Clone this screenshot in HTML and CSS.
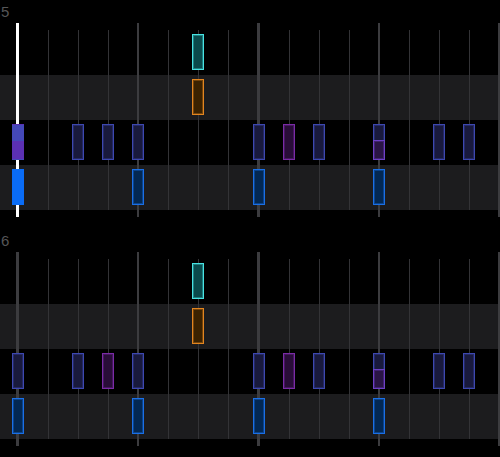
FILE: index.html
```html
<!DOCTYPE html>
<html>
<head>
<meta charset="utf-8">
<link rel="stylesheet" href="styles.css">
</head>
<body>
<div class="timeline">
  <section class="bar">
    <div class="label">5</div>
    <div class="track playing">
      <div class="row">
        <span class="blk cyan" style="grid-column: 7"></span>
      </div>
      <div class="row">
        <span class="blk orange" style="grid-column: 7"></span>
      </div>
      <div class="row">
        <span class="blk active-split" style="grid-column: 1"></span>
        <span class="blk navy" style="grid-column: 3"></span>
        <span class="blk navy" style="grid-column: 4"></span>
        <span class="blk navy" style="grid-column: 5"></span>
        <span class="blk navy" style="grid-column: 9"></span>
        <span class="blk magenta" style="grid-column: 10"></span>
        <span class="blk navy" style="grid-column: 11"></span>
        <span class="blk navy stacked" style="grid-column: 13"><span class="overlap"></span></span>
        <span class="blk navy" style="grid-column: 15"></span>
        <span class="blk navy" style="grid-column: 16"></span>
      </div>
      <div class="row">
        <span class="blk active-blue" style="grid-column: 1"></span>
        <span class="blk blue" style="grid-column: 5"></span>
        <span class="blk blue" style="grid-column: 9"></span>
        <span class="blk blue" style="grid-column: 13"></span>
      </div>
    </div>
  </section>
  <section class="bar">
    <div class="label">6</div>
    <div class="track">
      <div class="row">
        <span class="blk cyan" style="grid-column: 7"></span>
      </div>
      <div class="row">
        <span class="blk orange" style="grid-column: 7"></span>
      </div>
      <div class="row">
        <span class="blk navy" style="grid-column: 1"></span>
        <span class="blk navy" style="grid-column: 3"></span>
        <span class="blk magenta" style="grid-column: 4"></span>
        <span class="blk navy" style="grid-column: 5"></span>
        <span class="blk navy" style="grid-column: 9"></span>
        <span class="blk magenta" style="grid-column: 10"></span>
        <span class="blk navy" style="grid-column: 11"></span>
        <span class="blk navy stacked" style="grid-column: 13"><span class="overlap"></span></span>
        <span class="blk navy" style="grid-column: 15"></span>
        <span class="blk navy" style="grid-column: 16"></span>
      </div>
      <div class="row">
        <span class="blk blue" style="grid-column: 1"></span>
        <span class="blk blue" style="grid-column: 5"></span>
        <span class="blk blue" style="grid-column: 9"></span>
        <span class="blk blue" style="grid-column: 13"></span>
      </div>
    </div>
  </section>
</div>
</body>
</html>
```
FILE: styles.css
```css
html, body {
  margin: 0;
  padding: 0;
  background: #000;
}
body {
  width: 500px;
  height: 457px;
  overflow: hidden;
  font-family: "Liberation Sans", Arial, sans-serif;
}
.timeline {
  display: flex;
  flex-direction: column;
  gap: 12px;
}
.bar {
  display: flex;
  flex-direction: column;
}
.label {
  height: 23px;
  line-height: 23px;
  font-size: 15px;
  color: #555557;
  padding-left: 1px;
}
.track {
  padding: 7px 0;
  display: flex;
  flex-direction: column;
  background:
    repeating-linear-gradient(to right, transparent 0 16.4px, #3c3c3f 16.4px 18.9px, transparent 18.9px 120.5px),
    repeating-linear-gradient(to right, transparent 0 17.6px, #333336 17.6px 18.6px, transparent 18.6px 30.125px) 0 7px / 100% 180px no-repeat,
    linear-gradient(to bottom, transparent 0 52px, #1c1c1e 52px 97px, transparent 97px 142px, #1c1c1e 142px 187px, transparent 187px);
}
.track.playing {
  background:
    linear-gradient(to right, transparent 0 16.4px, #ffffff 16.4px 18.9px, transparent 18.9px) no-repeat,
    repeating-linear-gradient(to right, transparent 0 16.4px, #3c3c3f 16.4px 18.9px, transparent 18.9px 120.5px),
    repeating-linear-gradient(to right, transparent 0 17.6px, #333336 17.6px 18.6px, transparent 18.6px 30.125px) 0 7px / 100% 180px no-repeat,
    linear-gradient(to bottom, transparent 0 52px, #1c1c1e 52px 97px, transparent 97px 142px, #1c1c1e 142px 187px, transparent 187px);
}
.row {
  height: 45px;
  display: grid;
  grid-template-columns: repeat(17, 30.125px);
  padding-left: 2.55px;
  align-items: center;
  justify-items: center;
}
.blk {
  grid-row: 1;
  display: block;
  box-sizing: border-box;
  width: 12px;
  height: 36px;
  margin-top: -1px;
  border: 1px solid;
}
.navy {
  background: #191a3d;
  border-color: #3d48b0;
  box-shadow: inset 0 0 0 1px rgba(61, 72, 176, 0.35);
}
.magenta {
  background: #290d38;
  border-color: #7a2ba6;
  box-shadow: inset 0 0 0 1px rgba(122, 43, 166, 0.35);
}
.blue {
  background: #032853;
  border-color: #1a6fe6;
  box-shadow: inset 0 0 0 1px rgba(26, 111, 230, 0.4);
}
.cyan {
  background: #0a4a4c;
  border-color: #48e2e2;
  box-shadow: inset 0 0 0 1px rgba(72, 226, 226, 0.35);
}
.orange {
  background: #3b2200;
  border-color: #e2851f;
  box-shadow: inset 0 0 0 1px rgba(226, 133, 31, 0.35);
}
.stacked {
  position: relative;
}
.overlap {
  position: absolute;
  left: -1px;
  right: -1px;
  bottom: -1px;
  height: 20px;
  box-sizing: border-box;
  background: #2a1545;
  border: 1px solid #6d40c6;
  box-shadow: inset 0 0 0 1px rgba(109, 64, 198, 0.35);
}
.active-split {
  border-color: transparent;
  background: linear-gradient(to bottom, #4448b8 0 47%, #5b30b3 47% 100%);
}
.active-blue {
  border-color: transparent;
  background: #0a6cf6;
}
```
